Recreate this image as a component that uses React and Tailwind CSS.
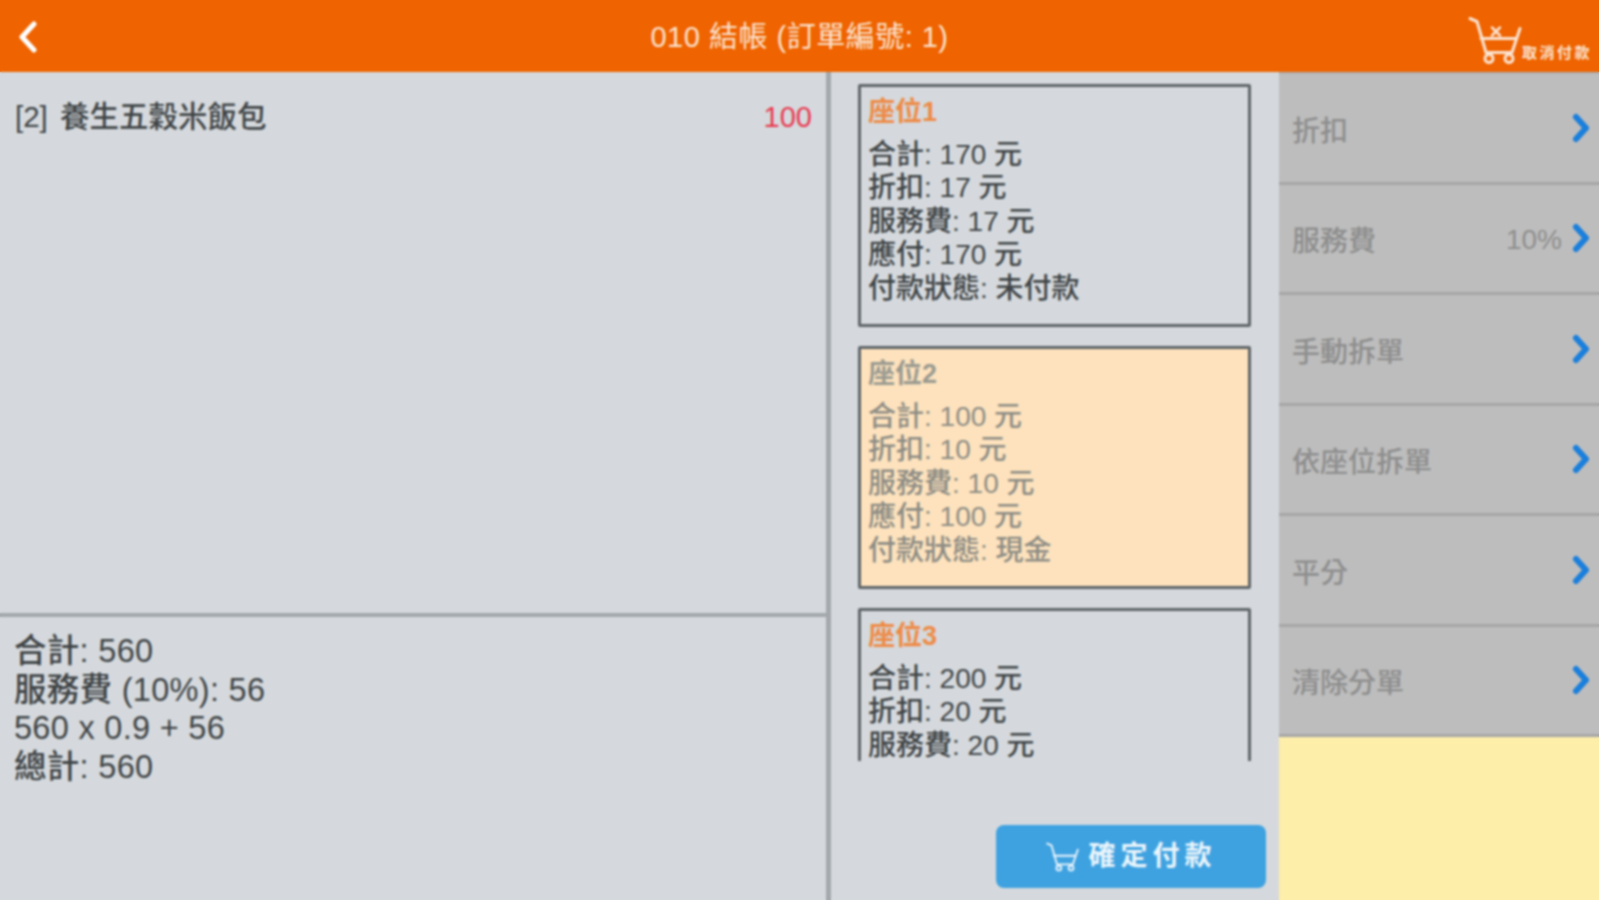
import React from 'react';

const seats = [
  { name: '座位1', total: 170, off: 17, fee: 17, pay: 170, status: '未付款' },
  { name: '座位2', total: 100, off: 10, fee: 10, pay: 100, status: '現金', active: true },
  { name: '座位3', total: 200, off: 20, fee: 20, pay: 200, status: '未付款' },
];

const menu = [
  { label: '折扣' },
  { label: '服務費', value: '10%' },
  { label: '手動拆單' },
  { label: '依座位拆單' },
  { label: '平分' },
  { label: '清除分單' },
];

function Cart({ className, children }) {
  return (
    <svg viewBox="0 0 54 48" fill="none" stroke="currentColor" strokeWidth="3" strokeLinecap="round" strokeLinejoin="round" className={className}>
      <path d="M2 2 L9 5 L18 36 H44 L52 12" />
      <path d="M13 22 H48" />
      <circle cx="21" cy="42" r="4" />
      <circle cx="41" cy="42" r="4" />
      {children}
    </svg>
  );
}

function SeatCard({ seat }) {
  return (
    <div className={`shrink-0 h-[243px] border-[3px] border-[#5f6569] rounded-[2px] pt-[9px] px-[7px] ${seat.active ? 'bg-[#fde2bd] text-[#8d8c84]' : 'text-[#3f4446]'}`}>
      <div className={`text-[27px] leading-[33px] font-bold ${seat.active ? 'text-[#9a9a90]' : 'text-[#ee8a45]'}`}>{seat.name}</div>
      <div className="mt-[9px] text-[28px] leading-[33.4px] font-medium">
        <div>合計: {seat.total} 元</div>
        <div>折扣: {seat.off} 元</div>
        <div>服務費: {seat.fee} 元</div>
        <div>應付: {seat.pay} 元</div>
        <div>付款狀態: {seat.status}</div>
      </div>
    </div>
  );
}

export default function App() {
  return (
    <div className="relative w-[1599px] h-[900px] overflow-hidden flex flex-col bg-[#d5d9dd] font-['Liberation_Sans','Noto_Sans_CJK_TC',sans-serif]">
      {/* Header */}
      <div className="h-[72px] shrink-0 bg-[#ef6300] flex items-center justify-between relative text-[#fbe3d0]">
        <svg viewBox="0 0 20 32" fill="none" stroke="white" strokeWidth="5" strokeLinecap="round" strokeLinejoin="round" className="ml-[18px] w-[20px] h-[32px] mt-[2px]">
          <path d="M16 3 L4 16 L16 29" />
        </svg>
        <div className="absolute inset-x-0 top-[2px] h-[72px] flex items-center justify-center text-[29px] tracking-[0.5px]">010 結帳 (訂單編號: 1)</div>
        <div className="flex items-end mr-[7px] mt-[9px] relative">
          <Cart className="w-[54px] h-[49px]">
            <path d="M24 11 L32 19 M32 11 L24 19" strokeWidth="2.5" />
          </Cart>
          <span className="text-[15px] leading-[20px] tracking-[2.5px] font-bold mb-[2px]">取消付款</span>
        </div>
      </div>

      <div className="flex flex-1 min-h-0">
        {/* Order */}
        <div className="w-[831px] shrink-0 border-r-[5px] border-[#a3a8ac] flex flex-col text-[#3f4446]">
          <div className="h-[545px] shrink-0 border-b-[4px] border-[#a3a8ac] pt-[27px] pl-[15px] pr-[14px] flex justify-between text-[29.5px] leading-[36px] font-medium">
            <span><span className="mr-[4px]">[2]</span> 養生五穀米飯包</span>
            <span className="text-[#e8384f] text-[29px]">100</span>
          </div>
          <div className="pt-[15px] pl-[14px] text-[32.5px] leading-[38.5px] font-medium tracking-[0.3px]">
            <div>合計: 560</div>
            <div>服務費 (10%): 56</div>
            <div>560 x 0.9 + 56</div>
            <div>總計: 560</div>
          </div>
        </div>

        {/* Seats */}
        <div className="w-[448px] shrink-0 flex flex-col">
          <div className="h-[689px] shrink-0 overflow-hidden pt-[12px] pl-[27px] pr-[28px] flex flex-col gap-[19px]">
            {seats.map((seat) => (
              <SeatCard key={seat.name} seat={seat} />
            ))}
          </div>
          <div className="mt-[64px] mr-[13px] self-end w-[270px] h-[63px] rounded-[8px] bg-[#3fa2e0] flex items-center justify-center gap-[10px] text-[#eaf5fc]">
            <Cart className="w-[33px] h-[30px]" />
            <span className="text-[27px] font-bold tracking-[5px]">確定付款</span>
          </div>
        </div>

        {/* Menu */}
        <div className="flex-1 flex flex-col bg-[#fdeeaa] border-t-[2px] border-[#b0b0b0]">
          {menu.map((item) => (
            <div key={item.label} className="h-[110.5px] shrink-0 bg-[#bdbdbd] border-b-[3px] border-[#a6a6a6] flex items-center justify-between pl-[13px] pr-[8px] text-[28px] text-[#8e8e8e] font-medium">
              <span className="mt-[8px]">{item.label}</span>
              <div className="flex items-center gap-[9px]">
                {item.value && <span className="mt-[4px]">{item.value}</span>}
                <svg viewBox="0 0 20 30" fill="none" stroke="#1a7fdc" strokeWidth="6" strokeLinecap="round" strokeLinejoin="round" className="w-[20px] h-[30px]">
                  <path d="M5 4 L15 15 L5 26" />
                </svg>
              </div>
            </div>
          ))}
        </div>
      </div>

      {/* the screenshot is a soft upscale, this softens everything under it */}
      <div className="absolute inset-0 backdrop-blur-[1px] pointer-events-none"></div>
    </div>
  );
}
